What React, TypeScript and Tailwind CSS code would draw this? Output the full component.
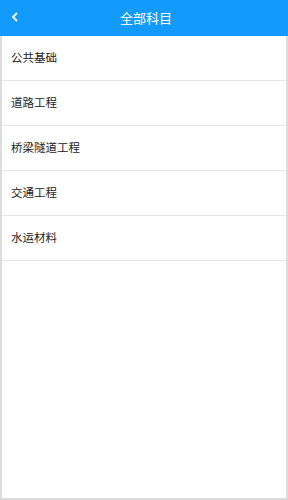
export default function App() {
    const subjects = ["公共基础", "道路工程", "桥梁隧道工程", "交通工程", "水运材料"];

    return (
        <div
            className="w-[288px] h-[500px] flex flex-col bg-white border-x-2 border-b-2 border-[#dcdcdc]"
            style={{ fontFamily: '"Noto Sans CJK SC", "Noto Sans", sans-serif' }}
        >
            <div className="relative h-[36px] -mx-[2px] pl-[4px] bg-[#129bfc] flex items-center justify-center">
                <svg
                    className="absolute left-[10px] top-[11px]"
                    width="10"
                    height="12"
                    viewBox="0 0 10 12"
                    fill="none"
                    stroke="white"
                    strokeWidth="1.8"
                >
                    <path d="M7 2 L3 6 L7 10" />
                </svg>
                <span className="text-white text-[13px]">全部科目</span>
            </div>
            {subjects.map(s => (
                <div
                    key={s}
                    className="h-[45px] flex items-center pl-[9px] border-b border-[#e6e6e6] text-[11.5px] text-[#222]"
                >
                    {s}
                </div>
            ))}
        </div>
    );
}
